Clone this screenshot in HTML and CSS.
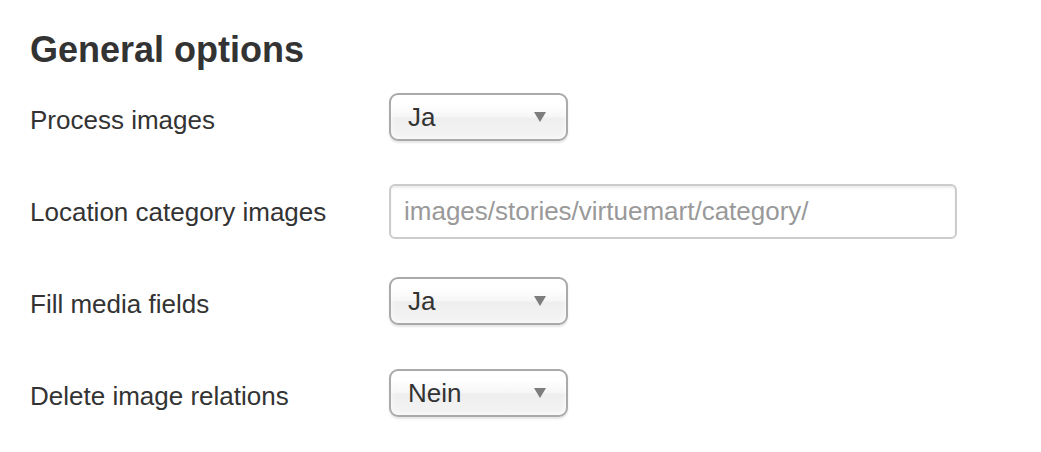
FILE: index.html
```html
<!DOCTYPE html>
<html lang="en">
<head>
    <meta charset="UTF-8">
    <meta name="viewport" content="width=device-width, initial-scale=1.0">
    <title>General options</title>
    <link rel="stylesheet" href="styles.css">
</head>
<body>
    <div class="options">
        <h2>General options</h2>

        <div class="row">
            <label class="label">Process images</label>
            <div class="select">
                <span>Ja</span>
                <svg class="arrow" width="12" height="10" viewBox="0 0 12 10"><polygon points="0,0 12,0 6,10" fill="#7d7d7d"/></svg>
            </div>
        </div>

        <div class="row">
            <label class="label">Location category images</label>
            <input type="text" class="text-input" placeholder="images/stories/virtuemart/category/">
        </div>

        <div class="row">
            <label class="label">Fill media fields</label>
            <div class="select">
                <span>Ja</span>
                <svg class="arrow" width="12" height="10" viewBox="0 0 12 10"><polygon points="0,0 12,0 6,10" fill="#7d7d7d"/></svg>
            </div>
        </div>

        <div class="row">
            <label class="label">Delete image relations</label>
            <div class="select">
                <span>Nein</span>
                <svg class="arrow" width="12" height="10" viewBox="0 0 12 10"><polygon points="0,0 12,0 6,10" fill="#7d7d7d"/></svg>
            </div>
        </div>
    </div>
</body>
</html>
```

FILE: styles.css
```css
body {
    font-family: "Liberation Sans", Arial, sans-serif;
    margin: 0;
    padding: 28px 30px 0;
    background-color: #fff;
    color: #333;
}
h2 {
    margin: 0 0 22px;
    font-size: 36px;
    line-height: 43px;
    font-weight: bold;
    color: #333;
}
.row {
    display: flex;
    align-items: flex-start;
    height: 92px;
}
.label {
    width: 359px;
    padding-top: 9px;
    font-size: 26px;
    line-height: 36px;
    color: #333;
}
.select {
    box-sizing: border-box;
    width: 179px;
    height: 48px;
    padding: 0 20px 0 17px;
    display: flex;
    align-items: center;
    justify-content: space-between;
    border: 2px solid #aaa;
    border-radius: 9px;
    background: linear-gradient(#fff 20%, #f6f6f6 50%, #eee 52%, #f4f4f4 100%);
    box-shadow: inset 0 0 5px #fff, 0 2px 2px rgba(0, 0, 0, 0.1);
    font-size: 26px;
    color: #333;
}
.arrow {
    display: block;
}
.text-input {
    box-sizing: border-box;
    width: 568px;
    height: 55px;
    margin-top: -1px;
    padding: 0 13px;
    border: 2px solid #ccc;
    border-radius: 6px;
    box-shadow: inset 0 2px 2px rgba(0, 0, 0, 0.075);
    font-family: "Liberation Sans", Arial, sans-serif;
    font-size: 26px;
    color: #555;
}
.text-input::placeholder {
    color: #999;
}
```
